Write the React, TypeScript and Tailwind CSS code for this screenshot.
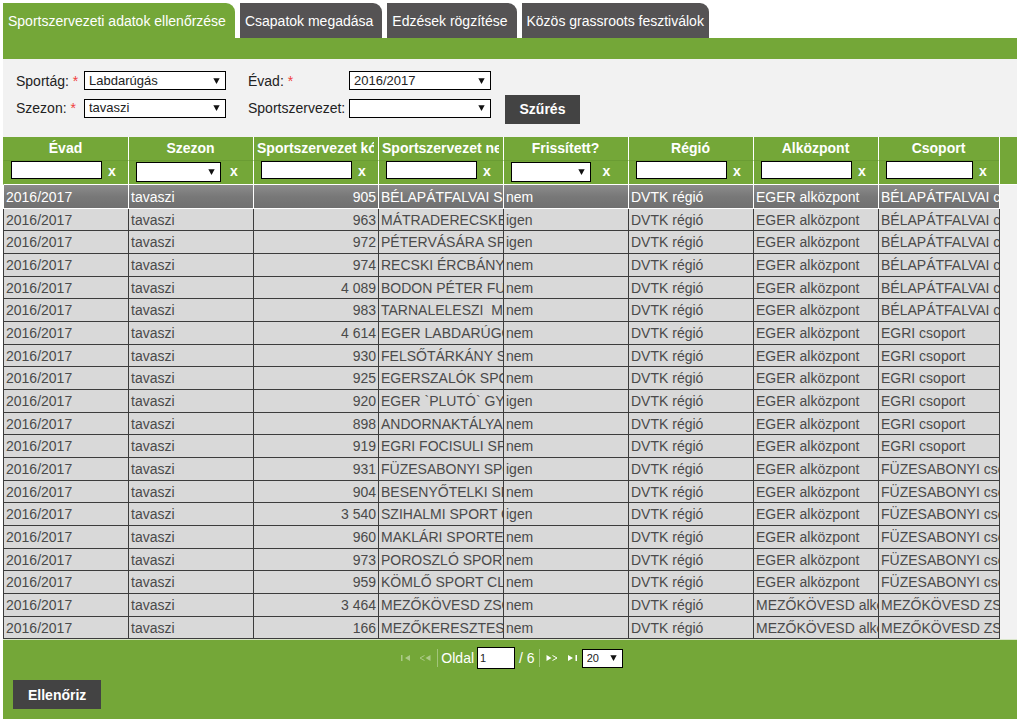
import React, { useState } from "react";

type Option = string;

function Arrow({ className }: { className: string }) {
  return (
    <svg viewBox="0 0 8 7" className={`pointer-events-none absolute h-[6px] w-[7px] ${className}`} aria-hidden="true">
      <path d="M0.3 0.3h7.4L4 7z" fill="#111" />
    </svg>
  );
}

function SelectBox({
  id,
  label,
  options,
  size = "form",
  className = "",
}: {
  id: string;
  label?: string;
  options: Option[];
  size?: "form" | "filter" | "pager";
  className?: string;
}) {
  const height = size === "filter" ? "h-5" : "h-[19px]";
  const text = size === "pager" ? "text-[11px] leading-4 pl-1" : "text-[13px] leading-4 pl-1";
  return (
    <span className={`relative flex items-center ${className}`}>
      <select
        id={id}
        aria-label={label}
        className={`w-full appearance-none border border-black bg-white pr-4 font-normal text-[#222] ${height} ${text}`}
      >
        {options.map((o) => (
          <option key={o}>{o}</option>
        ))}
      </select>
      <Arrow className="right-[6px]" />
    </span>
  );
}

const tabs = [
  "Sportszervezeti adatok ellenőrzése",
  "Csapatok megadása",
  "Edzések rögzítése",
  "Közös grassroots fesztiválok",
];

type Column = { title: string; filter: "text" | "select"; field: string };

const columns: Column[] = [
  { title: "Évad", filter: "text", field: "w-[91px]" },
  { title: "Szezon", filter: "select", field: "w-[85px]" },
  { title: "Sportszervezet kód", filter: "text", field: "w-[91px]" },
  { title: "Sportszervezet neve", filter: "text", field: "w-[91px]" },
  { title: "Frissített?", filter: "select", field: "w-[80px]" },
  { title: "Régió", filter: "text", field: "w-[91px]" },
  { title: "Alközpont", filter: "text", field: "w-[91px]" },
  { title: "Csoport", filter: "text", field: "w-[87px]" },
];

const BEL = "BÉLAPÁTFALVAI csoport";
const EGRI = "EGRI csoport";
const FUZ = "FÜZESABONYI csoport";
const MEZ = "MEZŐKÖVESD ZSÓRY";
const EGER = "EGER alközpont";
const MEZO = "MEZŐKÖVESD alközpont";

const rows: [string, string, string, string, string][] = [
  ["905", "BÉLAPÁTFALVAI SPORT", "nem", EGER, BEL],
  ["963", "MÁTRADERECSKE SE", "igen", EGER, BEL],
  ["972", "PÉTERVÁSÁRA SPORT", "igen", EGER, BEL],
  ["974", "RECSKI ÉRCBÁNYÁSZ", "nem", EGER, BEL],
  ["4 089", "BODON PÉTER FUTBALL", "nem", EGER, BEL],
  ["983", "TARNALELESZI  MEDOSZ", "nem", EGER, BEL],
  ["4 614", "EGER LABDARÚGÓ", "nem", EGER, EGRI],
  ["930", "FELSŐTÁRKÁNY SC", "nem", EGER, EGRI],
  ["925", "EGERSZALÓK SPORT", "nem", EGER, EGRI],
  ["920", "EGER `PLUTÓ` GYERMEK", "igen", EGER, EGRI],
  ["898", "ANDORNAKTÁLYA SC", "nem", EGER, EGRI],
  ["919", "EGRI FOCISULI SPORT", "nem", EGER, EGRI],
  ["931", "FÜZESABONYI SPORT", "igen", EGER, FUZ],
  ["904", "BESENYŐTELKI SPORT", "nem", EGER, FUZ],
  ["3 540", "SZIHALMI SPORT CLUB", "igen", EGER, FUZ],
  ["960", "MAKLÁRI SPORTEGYLET", "nem", EGER, FUZ],
  ["973", "POROSZLÓ SPORT", "nem", EGER, FUZ],
  ["959", "KÖMLŐ SPORT CLUB", "nem", EGER, FUZ],
  ["3 464", "MEZŐKÖVESD ZSÓRY", "nem", MEZO, MEZ],
  ["166", "MEZŐKERESZTES SE", "nem", MEZO, MEZ],
];

function FilterForm() {
  const star = <span className="text-[#f04040]">*</span>;
  return (
    <form
      onSubmit={(e) => e.preventDefault()}
      className="flex items-end gap-[14px] bg-[#f2f2f2] pt-2 pb-[13px] pl-[13px] text-[#222]"
    >
      <div className="grid grid-cols-[68px_142px_22px_101px_142px] grid-rows-[27px_28px] items-center pb-[2px]">
        <label htmlFor="sportag">Sportág: {star}</label>
        <SelectBox id="sportag" options={["Labdarúgás", "Futsal"]} />
        <label htmlFor="evad" className="col-start-4">Évad: {star}</label>
        <SelectBox id="evad" options={["2016/2017", "2015/2016"]} />
        <label htmlFor="szezon" className="col-start-1">Szezon: {star}</label>
        <SelectBox id="szezon" options={["tavaszi", "őszi"]} />
        <label htmlFor="szervezet" className="col-start-4">Sportszervezet:</label>
        <SelectBox id="szervezet" options={[""]} />
      </div>
      <button type="submit" className="h-[29px] w-[75px] bg-[#434343] pb-px font-bold text-white">
        Szűrés
      </button>
    </form>
  );
}

function Grid() {
  const [selected, setSelected] = useState(0);
  return (
    <table className="w-full table-fixed border-separate border-spacing-0 bg-[#f2f2f2]">
      <colgroup>
        {columns.map((c, i) => (
          <col key={c.title} className={i === 7 ? "w-[121px]" : "w-[125px]"} />
        ))}
        <col />
      </colgroup>
      <thead className="bg-[#74a738] text-white">
        <tr className="h-6">
          {columns.map((c, i) => (
            <th
              key={c.title}
              scope="col"
              className={`border-b border-l border-b-[#6a9c33] pt-px pr-1 pl-[3px] align-top ${
                i === 0 ? "border-l-[#74a738]" : "border-l-white"
              }`}
            >
              <div className={`overflow-hidden whitespace-nowrap ${i === 2 || i === 3 ? "text-left" : "text-center"}`}>
                {c.title}
              </div>
            </th>
          ))}
          <td className="border-l border-white" />
        </tr>
        <tr className="h-6">
          {columns.map((c, i) => (
            <td
              key={c.title}
              className={`border-b border-l border-b-white pl-[7px] align-top ${
                i === 0 ? "border-l-[#74a738]" : "border-l-white"
              }`}
            >
              <div className="flex items-start">
                {c.filter === "text" ? (
                  <input
                    type="text"
                    aria-label={c.title}
                    className={`h-[18px] border border-black bg-white px-1 text-[13px] text-[#222] ${c.field}`}
                  />
                ) : (
                  <SelectBox
                    id={`filter-${i}`}
                    label={c.title}
                    size="filter"
                    options={["", "igen", "nem"]}
                    className={`mt-px ${c.field}`}
                  />
                )}
                <button
                  type="button"
                  aria-label={`${c.title} szűrő törlése`}
                  className="flex-1 pr-[6px] leading-5 font-bold"
                >
                  x
                </button>
              </div>
            </td>
          ))}
          <td className="border-b border-l border-white" />
        </tr>
      </thead>
      <tbody>
        {rows.map(([code, name, updated, center, group], r) => {
          const active = r === selected;
          const cell = `overflow-hidden whitespace-pre border-b border-l px-[2px] ${
            active ? "border-white" : "border-[#3c3c3c]"
          }`;
          return (
            <tr
              key={code}
              onClick={() => setSelected(r)}
              className={`h-[23px] first:h-6 nth-[3n+2]:h-[22px] ${active ? "text-white" : "text-[#4a4a4a]"}`}
            >
              {["2016/2017", "tavaszi", code, name, updated, "DVTK régió", center, group].map((value, i) => (
                <td
                  key={i}
                  className={`${cell} ${i === 2 ? "text-right" : ""} ${
                    active ? "bg-linear-to-b from-[#8c8c8c] via-[#787878] to-[#707070]" : "bg-[#d9d9d9]"
                  }`}
                >
                  {value}
                </td>
              ))}
              <td className={`border-l ${active ? "border-white" : "border-[#3c3c3c]"}`} />
            </tr>
          );
        })}
      </tbody>
    </table>
  );
}

function Pager() {
  return (
    <nav aria-label="Lapozó" className="flex h-[22px] items-center justify-center pl-1 text-white">
      <button type="button" disabled aria-label="Első oldal" className="mr-2 opacity-40">
        <svg viewBox="0 0 10 6" className="h-[6px] w-[10px]" fill="#fff">
          <path d="M0 0h1.500v6H0zM9 0L4 3l5 3z" />
        </svg>
      </button>
      <button type="button" disabled aria-label="Előző oldal" className="mr-[6px] opacity-40">
        <svg viewBox="0 0 12 6" className="h-[6px] w-3" fill="none" stroke="#fff">
          <path d="M5.500 0.500L1 3l4.500 2.500" />
          <path d="M11.500 0L6.500 3l5 3z" fill="#fff" stroke="none" />
        </svg>
      </button>
      <span className="mr-[3px] h-[18px] border-l border-[#a2c57a]" />
      <label htmlFor="oldal">Oldal</label>
      <input
        id="oldal"
        type="text"
        defaultValue="1"
        className="mr-1 ml-[3px] h-[22px] w-[38px] border border-black bg-white px-[2px] text-[11px] text-[#222]"
      />
      <span>/ 6</span>
      <span className="mr-[6px] ml-1 h-[18px] border-l border-[#a2c57a]" />
      <button type="button" aria-label="Következő oldal" className="mr-[9px]">
        <svg viewBox="0 0 12 6" className="h-[6px] w-3" fill="none" stroke="#fff">
          <path d="M0.500 0l5 3l-5 3z" fill="#fff" stroke="none" />
          <path d="M6.500 0.500L11 3L6.500 5.500" />
        </svg>
      </button>
      <button type="button" aria-label="Utolsó oldal" className="mr-[5px]">
        <svg viewBox="0 0 10 6" className="h-[6px] w-[10px]" fill="#fff">
          <path d="M8.500 0H10v6H8.500zM1 0l5 3l-5 3z" />
        </svg>
      </button>
      <SelectBox id="meret" label="Sorok száma" size="pager" options={["20", "50", "100"]} className="w-[41px]" />
    </nav>
  );
}

export default function App() {
  return (
    <main className="bg-white pt-[3px] pr-[7px] pb-[5px] pl-[3px] font-['Liberation_Sans',Arial,sans-serif] text-[14px] leading-5">
      <div role="tablist" className="flex gap-[5px]">
        {tabs.map((t, i) => (
          <button
            key={t}
            role="tab"
            type="button"
            aria-selected={i === 0}
            className={`h-[35px] rounded-tr-[9px] pr-[9px] pl-[5px] whitespace-nowrap text-white last:pr-[5px] ${
              i === 0 ? "bg-[#74a738]" : "bg-[#555354]"
            }`}
          >
            {t}
          </button>
        ))}
      </div>
      <div className="h-[21px] bg-[#74a738]" />
      <FilterForm />
      <Grid />
      <footer className="border-t border-[#d9e6c8] bg-[#74a738] pt-[7px] pb-[10px]">
        <Pager />
        <button type="button" className="mt-[11px] ml-[10px] h-[29px] bg-[#434343] px-[15px] font-bold text-white">
          Ellenőriz
        </button>
      </footer>
    </main>
  );
}
